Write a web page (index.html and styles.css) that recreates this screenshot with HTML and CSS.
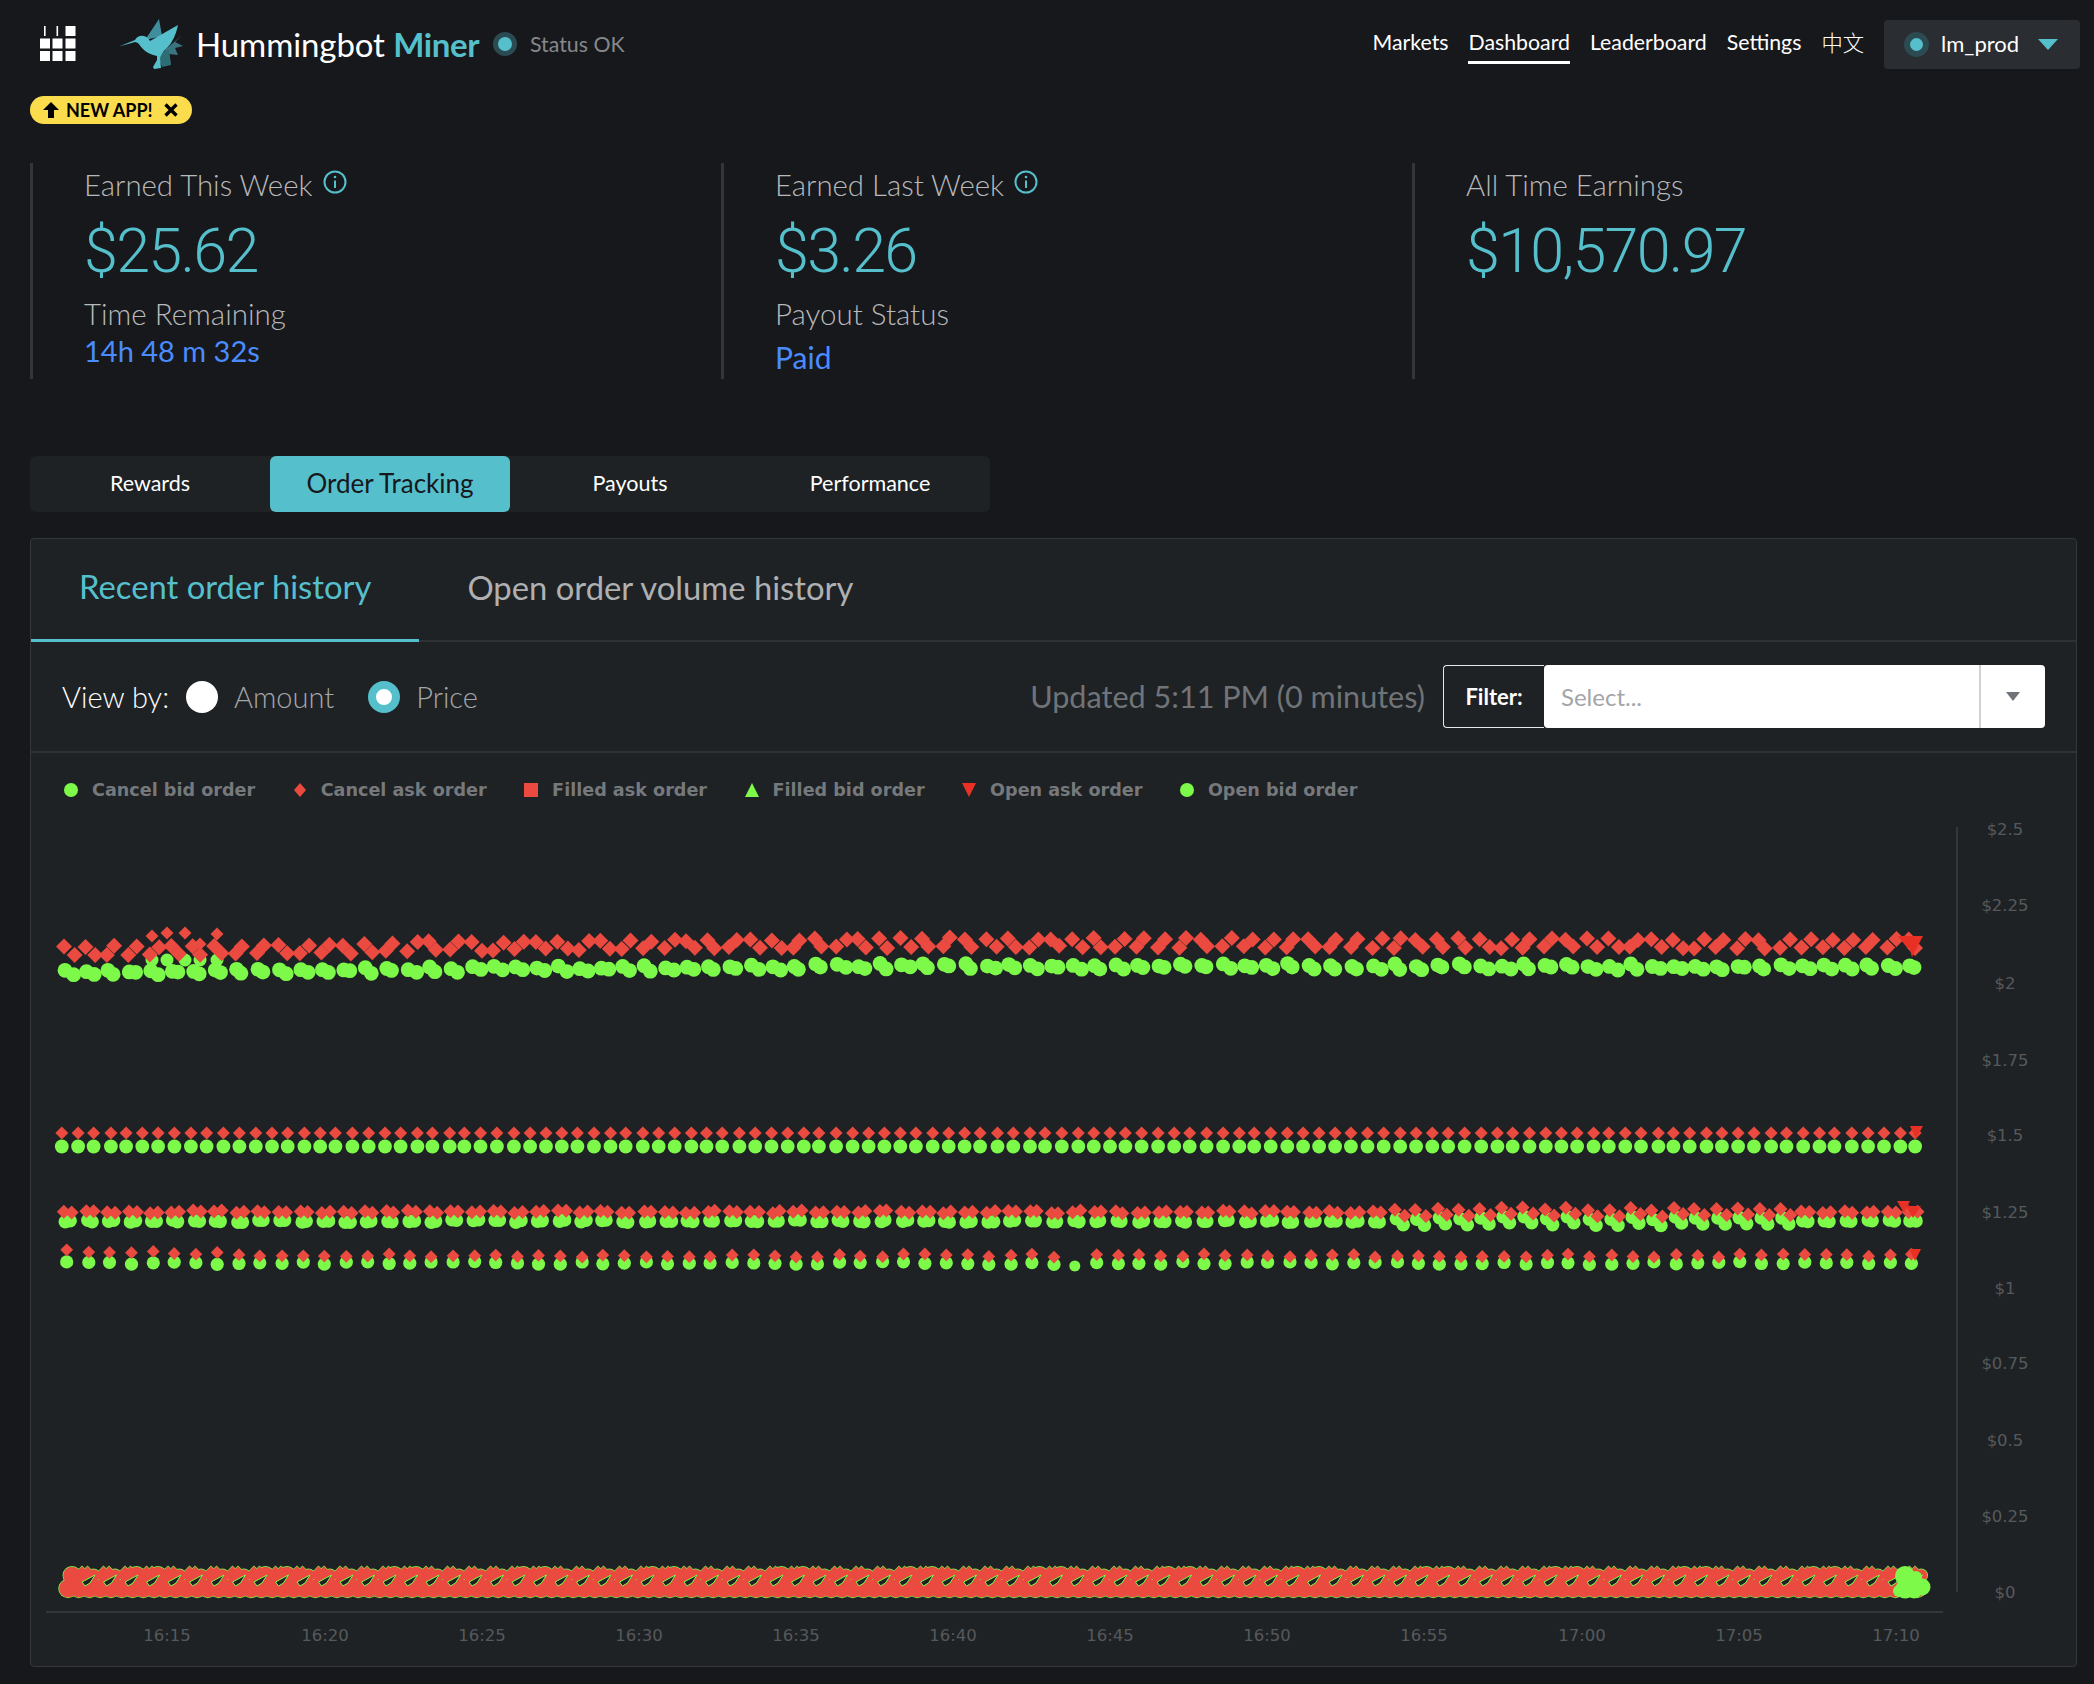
FILE: index.html
```html
<!DOCTYPE html>
<html lang="en">
<head>
<meta charset="utf-8">
<title>Hummingbot Miner</title>
<link rel="stylesheet" href="styles.css">
</head>
<body>
<div class="page">
  <header class="topbar">
    <div class="brand">
      <svg class="grid-icon" width="36" height="36" viewBox="0 0 36 36">
        <rect x="4" y="0" width="1.6" height="10" fill="#fff"/><rect x="16.5" y="0" width="1.6" height="10" fill="#fff"/><rect x="25.500" y="0" width="10" height="10" fill="#fff"/>
        <rect x="0" y="12.500" width="10" height="10" fill="#fff"/><rect x="12.500" y="12.500" width="10" height="10" fill="#fff"/><rect x="25.500" y="12.500" width="10" height="10" fill="#fff"/>
        <rect x="0" y="25" width="10" height="10" fill="#fff"/><rect x="12.500" y="25" width="10" height="10" fill="#fff"/><rect x="25.500" y="25" width="10" height="10" fill="#fff"/>
      </svg>
      <svg class="logo" width="66" height="52" viewBox="119 16 66 52">
        <path fill="#3f8e9e" d="M146 38 L160 17 L163 34 Z"/>
        <path fill="#3a7480" d="M166 48 L183 33 L176 40 L184 44 L176 46 L179 53 L170 52 L172 63 L164 60 Z"/>
        <path fill="#2f6d75" d="M158 52 L170 48 L172 63 L163 65 Z"/>
        <path fill="#56bfcc" d="M120 44.500 L136 38 Q139 33 145 34 Q149 35 151 39 L179 23 Q176 38 168 46 Q163 50 161 56 L162 66 L155 67 L154 65 L158 58 L158 54 Q148 52 143 46 L139 41 L136 40 Z"/>
      </svg>
      <span class="title">Hummingbot <span class="accent">Miner</span></span>
      <span class="dot small-dot"></span>
      <span class="status">Status OK</span>
    </div>
    <nav class="nav">
      <a class="nav-link">Markets</a>
      <a class="nav-link active">Dashboard</a>
      <a class="nav-link">Leaderboard</a>
      <a class="nav-link">Settings</a>
      <a class="nav-link cjk">中文</a>
      <div class="account">
        <span class="dot"></span>
        <span class="account-name">lm_prod</span>
        <svg width="20" height="11" viewBox="0 0 20 11"><path d="M0 0H20L10 11Z" fill="#56bfcc"/></svg>
      </div>
    </nav>
  </header>

  <div class="badge">
    <svg width="16" height="16" viewBox="0 0 16 16"><path d="M8 0L16 8H11V16H5V8H0Z" fill="#000"/></svg>
    <span class="badge-text">NEW APP!</span>
    <svg width="14" height="14" viewBox="0 0 14 14"><path d="M1.500 1.500L12.500 12.500M12.500 1.500L1.500 12.500" stroke="#000" stroke-width="3.400"/></svg>
  </div>

  <section class="stats">
    <div class="stat">
      <div class="stat-label">Earned This Week
        <svg class="info" width="24" height="24" viewBox="0 0 24 24"><circle cx="12" cy="12" r="10.500" fill="none" stroke="#56bfcc" stroke-width="2"/><path d="M12 10.500V18" stroke="#56bfcc" stroke-width="2"/><circle cx="12" cy="7" r="1.300" fill="#56bfcc"/></svg>
      </div>
      <div class="stat-value">$25.62</div>
      <div class="stat-sub">Time Remaining</div>
      <div class="stat-blue">14h 48 m 32s</div>
    </div>
    <div class="stat">
      <div class="stat-label">Earned Last Week
        <svg class="info" width="24" height="24" viewBox="0 0 24 24"><circle cx="12" cy="12" r="10.500" fill="none" stroke="#56bfcc" stroke-width="2"/><path d="M12 10.500V18" stroke="#56bfcc" stroke-width="2"/><circle cx="12" cy="7" r="1.300" fill="#56bfcc"/></svg>
      </div>
      <div class="stat-value">$3.26</div>
      <div class="stat-sub">Payout Status</div>
      <div class="stat-blue paid">Paid</div>
    </div>
    <div class="stat">
      <div class="stat-label">All Time Earnings</div>
      <div class="stat-value">$10,570.97</div>
    </div>
  </section>

  <div class="tabs">
    <a class="tab">Rewards</a>
    <a class="tab active">Order Tracking</a>
    <a class="tab">Payouts</a>
    <a class="tab">Performance</a>
  </div>

  <section class="card">
    <div class="card-tabs">
      <a class="card-tab active">Recent order history</a>
      <a class="card-tab">Open order volume history</a>
    </div>
    <div class="controls">
      <div class="view-by">
        <span class="view-label">View by:</span>
        <span class="radio"></span><span class="radio-label">Amount</span>
        <span class="radio checked"></span><span class="radio-label">Price</span>
      </div>
      <div class="filter-group">
        <span class="updated">Updated 5:11 PM (0 minutes)</span>
        <span class="filter-label">Filter:</span>
        <div class="select">
          <span class="placeholder">Select...</span>
          <span class="select-caret"><svg width="14" height="9" viewBox="0 0 14 9"><path d="M0 0H14L7 9Z" fill="#6f7378"/></svg></span>
        </div>
      </div>
    </div>
    <div class="chart">
      <ul class="legend">
        <li class="legend-item"><svg width="14" height="14" viewBox="0 0 14 14"><circle cx="7" cy="7" r="7" fill="#7df94a"/></svg>Cancel bid order</li>
        <li class="legend-item"><svg width="14" height="14" viewBox="0 0 14 14"><path d="M7 0L13 7L7 14L1 7Z" fill="#ea4a3f"/></svg>Cancel ask order</li>
        <li class="legend-item"><svg width="14" height="14" viewBox="0 0 14 14"><rect width="14" height="14" fill="#ea4a3f"/></svg>Filled ask order</li>
        <li class="legend-item"><svg width="14" height="14" viewBox="0 0 14 14"><path d="M7 0L14 14H0Z" fill="#7df94a"/></svg>Filled bid order</li>
        <li class="legend-item"><svg width="14" height="14" viewBox="0 0 14 14"><path d="M0 0H14L7 14Z" fill="#e93024"/></svg>Open ask order</li>
        <li class="legend-item"><svg width="14" height="14" viewBox="0 0 14 14"><circle cx="7" cy="7" r="7" fill="#7df94a"/></svg>Open bid order</li>
      </ul>
      <svg id="plot" class="plot" width="2044" height="914" viewBox="31 753 2044 914">
        <g class="axis-lines">
          <line x1="1957" y1="827" x2="1957" y2="1592"/>
          <line x1="46" y1="1612" x2="1943" y2="1612"/>
        </g>
        <g class="axis-y">
          <text x="2005" y="835">$2.5</text><text x="2005" y="911">$2.25</text><text x="2005" y="989">$2</text><text x="2005" y="1066">$1.75</text><text x="2005" y="1141">$1.5</text><text x="2005" y="1218">$1.25</text><text x="2005" y="1294">$1</text><text x="2005" y="1369">$0.75</text><text x="2005" y="1446">$0.5</text><text x="2005" y="1522">$0.25</text><text x="2005" y="1598">$0</text>
        </g>
        <g class="axis-x">
          <text x="167" y="1641">16:15</text><text x="325" y="1641">16:20</text><text x="482" y="1641">16:25</text><text x="639" y="1641">16:30</text><text x="796" y="1641">16:35</text><text x="953" y="1641">16:40</text><text x="1110" y="1641">16:45</text><text x="1267" y="1641">16:50</text><text x="1424" y="1641">16:55</text><text x="1582" y="1641">17:00</text><text x="1739" y="1641">17:05</text><text x="1896" y="1641">17:10</text>
        </g>
        <g id="marks"></g>
      </svg>
    </div>
  </section>
</div>
<script src="chart.js"></script>
</body>
</html>
```

FILE: styles.css
```css
* { box-sizing: border-box; }
html, body { margin: 0; padding: 0; }
body {
  background: #17181b;
  color: #fff;
  font-family: "Lato", "Noto Sans CJK SC", sans-serif;
  width: 2094px;
  height: 1684px;
  overflow: hidden;
}
.page { padding: 0 16px 0 30px; }

.topbar { display: flex; justify-content: space-between; align-items: center; height: 88px; }
.brand { display: flex; align-items: center; }
.grid-icon { margin-left: 10px; }
.logo { margin-left: 42px; }
.title { margin-left: 12px; font-size: 33px; color: #fff; letter-spacing: -0.1px; }
.accent { color: #56bfcc; font-weight: 700; letter-spacing: -0.4px; }
.dot {
  display: inline-block; width: 16px; height: 16px; border-radius: 50%;
  background: #56bfcc; border: 6px solid #2c4a52; box-sizing: content-box;
}
.small-dot { margin-left: 14px; width: 14px; height: 14px; border-width: 5px; }
.status { margin-left: 13px; font-size: 21.300px; color: #85888b; }

.nav { display: flex; align-items: center; gap: 20px; }
.nav-link {
  font-size: 21.300px; line-height: 32px; color: #fff; padding-top: 2px;
  border-bottom: 3px solid transparent; height: 40px;
}
.nav-link.active { border-bottom-color: #fff; }
.cjk { font-family: "Noto Sans CJK SC", sans-serif; font-weight: 300; }
.account {
  display: flex; align-items: center; width: 196px; height: 49px; margin-right: -2px;
  background: #2a2d31; border-radius: 4px; padding-left: 20px;
}
.account .dot { width: 13px; height: 13px; border-width: 6px; }
.account-name { margin-left: 12px; font-size: 22px; width: 97px; padding-bottom: 2px; }

.badge {
  display: inline-flex; align-items: center; height: 28px; width: 162px; margin-top: 8px;
  background: #fbdc4c; border-radius: 14px; color: #000; padding-left: 13px; vertical-align: top;
}
.badge-text { margin-left: 7px; font-size: 18px; font-weight: 700; width: 98px; }

.stats { display: grid; grid-template-columns: repeat(3, 691px); margin-top: 39px; }
.stat { border-left: 3px solid #333538; height: 216px; padding: 4px 0 0 51px; }
.stat-label { display: flex; align-items: flex-start; gap: 10px; font-size: 29.400px; font-weight: 300; line-height: 35px; color: #b7b9bb; }
.info { margin-top: 3px; }
.stat-value { margin-top: 11px; font-family: "Roboto", sans-serif; font-size: 61px; font-weight: 300; line-height: 76px; letter-spacing: -1.700px; color: #56bfcc; }
.stat-sub { margin-top: 7px; font-size: 29.500px; font-weight: 300; line-height: 36px; color: #b7b9bb; }
.stat-blue { margin-top: 1px; font-size: 29px; line-height: 36px; color: #4a8cff; }
.paid { margin-top: 7px; font-size: 30px; }

.tabs { display: flex; width: 960px; height: 56px; margin-top: 77px; background: #1e2225; border-radius: 6px; }
.tab { width: 240px; display: flex; align-items: center; justify-content: center; padding-bottom: 2px; font-size: 21.500px; color: #fff; }
.tab.active { background: #56bfcc; color: #17181b; font-size: 26px; border-radius: 6px; }

.card { margin-top: 26px; width: 2047px; height: 1129px; background: #1e2225; border: 1px solid #33373a; border-radius: 4px; }
.card-tabs { display: flex; height: 103px; border-bottom: 2px solid #2e3235; }
.card-tab { display: flex; align-items: center; padding: 0 48px 6px; font-size: 32.800px; font-weight: 400; color: #aeb0b2; height: 103px; }
.card-tab.active { color: #56bfcc; border-bottom: 3px solid #56bfcc; }

.controls { display: flex; justify-content: space-between; align-items: center; height: 111px; padding: 0 31px 0 31px; border-bottom: 2px solid #2e3235; }
.view-by { display: flex; align-items: center; }
.view-label { font-size: 29px; margin-right: 17px; color: #fff; font-weight: 300; }
.radio { width: 32px; height: 32px; border-radius: 50%; background: #fff; }
.radio.checked { background: #fff; border: 8px solid #56bfcc; margin-left: 34px; }
.radio-label { margin-left: 16px; font-size: 29px; font-weight: 300; color: #a5a7a9; }

.filter-group { display: flex; align-items: center; }
.updated { font-size: 30.600px; color: #707478; margin-right: 18px; }
.filter-label {
  display: flex; align-items: center; justify-content: center; width: 101px; height: 63px;
  border: 1px solid #e8e8e8; border-right: 0; border-radius: 4px 0 0 4px; font-size: 22px; font-weight: 700;
}
.select { display: flex; width: 501px; height: 63px; background: #fff; border-radius: 4px; }
.placeholder { flex: 1; display: flex; align-items: center; padding-left: 17px; font-size: 24px; color: #a3a5a8; }
.select-caret { width: 66px; display: flex; align-items: center; justify-content: center; border-left: 2px solid #d0d2d4; }

.chart { position: relative; height: 914px; }
.plot { display: block; }
.legend {
  position: absolute; left: 0; top: 0; margin: 0; padding: 27px 0 0 33px; list-style: none;
  display: flex; gap: 37.500px;
}
.legend-item {
  display: flex; align-items: center; gap: 14px; height: 20px;
  font-family: "DejaVu Sans", sans-serif; font-weight: 700; font-size: 17.600px; color: #76797c;
}
.axis-lines line { stroke: #33373a; stroke-width: 2; }
.axis-y text, .axis-x text {
  font-family: "DejaVu Sans", sans-serif; font-size: 16.500px; fill: #56595c; text-anchor: middle;
}
```

FILE: chart.js
```js
(function () {
  var NS = "http://www.w3.org/2000/svg";
  var group = document.getElementById("marks");
  var GREEN = "#7df94a", RED = "#ea4a3f", OPEN = "#e93024", HOLE = "#1e2225";
  var seed = 7;
  function rnd() {
    seed = (seed * 16807) % 2147483647;
    return seed / 2147483647;
  }
  function jit(a) { return (rnd() * 2 - 1) * a; }
  var greens = [], reds = [];
  function add(list, x, y, r) { list.push([x, y, r]); }

  function circle(x, y, r, fill) {
    var c = document.createElementNS(NS, "circle");
    c.setAttribute("cx", x.toFixed(1)); c.setAttribute("cy", y.toFixed(1));
    c.setAttribute("r", r); c.setAttribute("fill", fill);
    group.appendChild(c);
  }
  function poly(points, fill, stroke) {
    var p = document.createElementNS(NS, "polygon");
    p.setAttribute("points", points.map(function (q) { return q[0].toFixed(1) + "," + q[1].toFixed(1); }).join(" "));
    p.setAttribute("fill", fill);
    if (stroke) { p.setAttribute("stroke", stroke); p.setAttribute("stroke-width", "1"); }
    group.appendChild(p);
  }
  function diamond(x, y, r, fill) { poly([[x, y - r], [x + r, y], [x, y + r], [x - r, y]], fill); }

  // Top band (~ $2.05)
  var i, x, px, k;
  for (i = 0; i < 87; i++) {
    x = 65 + 21.45 * i;
    var base = i < 40 ? 972 - i * 0.16 : 965.5 + (i - 40) * 0.03;
    var up = rnd() < 0.5;
    var dx = 4 + rnd() * 5;
    var lift = i < 15 ? 21 : 23;
    for (k = 0; k < 2; k++) {
      px = x + k * dx;
      add(greens, px, base + (k ? 2 : -1) + jit(1.6), 7.4);
      add(reds, px + (k ? 1 : -1), base - lift + ((k === 0) === up ? -4 : 4) + jit(1), 8);
    }
  }
  [[152, 936, 960], [167, 933, 960], [185, 933, 960], [200, 944, 960], [217, 934, 960]].forEach(function (p) {
    add(reds, p[0], p[1], 6.5); add(greens, p[0], p[2], 6.5);
  });

  // $1.5 row
  for (i = 0; i < 116; i++) {
    x = 62 + 16.12 * i + jit(0.8);
    add(greens, x, 1146.5, 6.9);
    add(reds, x, 1133, 6.5);
  }
  // $1.25 row
  for (i = 0; i < 87; i++) {
    x = 67 + 21.45 * i;
    var wide = x > 1390 && x < 1800;
    var amp = wide ? 3 : 0.9;
    var yc = 1221 + jit(amp * 0.5);
    var spread = wide ? 6 : 3.5;
    for (k = 0; k < 2; k++) {
      px = x + (k ? spread : -1) + jit(0.8);
      add(greens, px, yc + (wide ? (k ? 3 : -3) : jit(1)), 6.8);
      add(reds, px + (k ? 1.5 : -1.5), 1212 + (yc - 1221) + (wide ? (k ? 3 : -3) : jit(1.2)), 7);
    }
  }
  // $1 row
  for (i = 0; i < 87; i++) {
    x = 67 + 21.45 * i + jit(0.6);
    var ramp = Math.min(i / 10, 1);
    var cyD = 1263 + jit(1.4);
    if (i === 47) { add(greens, x, 1266, 5.5); continue; }
    add(greens, x, cyD, 6.6);
    add(reds, x, 1250 + ramp * 5.5 + jit(1.6), 6.4);
  }

  greens.forEach(function (p) { circle(p[0], p[1], p[2], GREEN); });
  reds.forEach(function (p) { diamond(p[0], p[1], p[2], RED); });

  // End-of-series open asks
  poly([[1898, 936], [1918, 936], [1908, 949]], OPEN);
  poly([[1906, 936], [1923, 936], [1912, 957]], OPEN);
  poly([[1910, 1126], [1923, 1126], [1916, 1139]], OPEN);
  poly([[1897, 1201], [1910, 1201], [1904, 1213]], OPEN);
  poly([[1906, 1206], [1921, 1206], [1913, 1218]], OPEN);
  poly([[1909, 1249], [1921, 1249], [1915, 1261]], OPEN);

  // Bottom band ($0): dense overlap of bids and asks
  var STEP = 10.75, big;
  function lobes(grow, color) {
    for (i = 0; i < 87; i++) {
      x = 72 + 21.5 * i;
      big = i % 6 === 3 || i % 6 === 4 || i === 0;
      circle(x, 1575.5, (big ? 8.8 : 6.3) + grow, color);
      if (i < 86) { diamond(x + 10, 1575, 8.7 + grow, color); }
      if (i > 0) { diamond(x - 6, 1575, 8.7 + grow, color); }
    }
  }
  for (x = 68; x <= 1921; x += STEP) { circle(x, 1588.5, 9.7, GREEN); }
  lobes(0.7, GREEN);
  for (x = 68; x <= 1921; x += STEP) { circle(x, 1588.5, 9, RED); }
  lobes(0, RED);
  for (i = 0; i < 86; i++) {
    x = 87 + 21.5 * i;
    poly([[x - 5, 1582], [x + 8, 1575], [x + 3, 1583], [x - 2, 1586]], HOLE, GREEN);
  }
  // The newest bids pile up at the right edge
  [[1905, 1576, 10], [1916, 1577, 6], [1922, 1587, 8.5], [1905, 1589, 9.5], [1914, 1590, 8.5], [1899, 1591, 6]].forEach(function (p) {
    circle(p[0], p[1], p[2], GREEN);
  });
})();
```
